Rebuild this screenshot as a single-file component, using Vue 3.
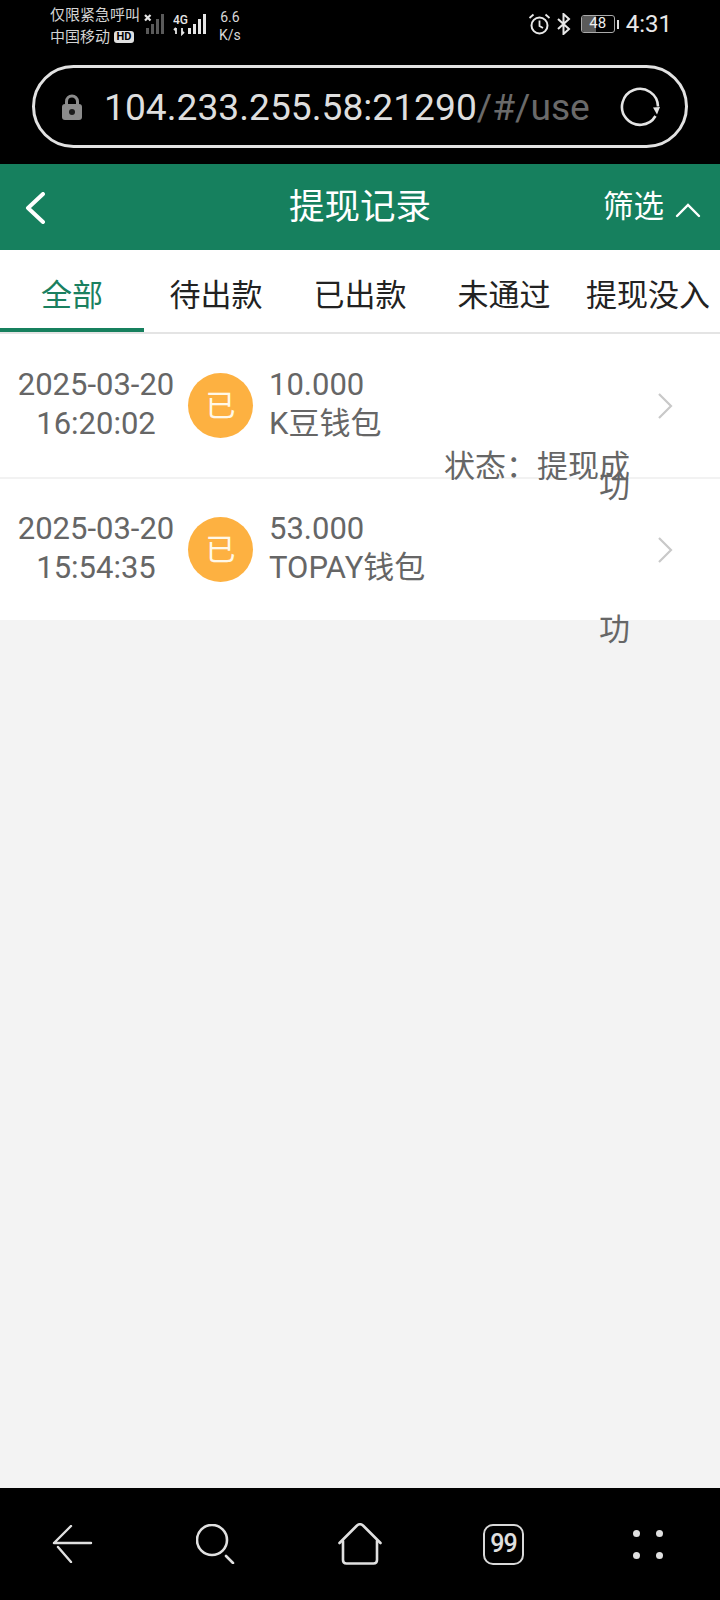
<script setup>
import { ref } from 'vue'

const tabs = ['全部', '待出款', '已出款', '未通过', '提现没入']
const active = ref(0)

const records = [
  { date: '2025-03-20', time: '16:20:02', amount: '10.000', wallet: 'K豆钱包', status: '状态：提现成功' },
  { date: '2025-03-20', time: '15:54:35', amount: '53.000', wallet: 'TOPAY钱包', status: '功' },
]

const dimBars = [[0, 14, 6], [5, 10, 10], [10, 5, 15], [15, 0, 20]]
const liveBars = [[0, 14, 6], [5, 10, 10], [10, 5, 15], [15, 0, 20]]
</script>

<template>
  <div class="page">
    <div class="top">
      <div class="status">
        <div class="carrier">
          <span>仅限紧急呼叫</span>
          <span class="carrier-line">中国移动<b class="hd">HD</b></span>
        </div>
        <svg class="sig-one" width="22" height="22" viewBox="0 0 22 22">
          <path d="M1 1l5.500 5.500M6.500 1L1 6.500" stroke="#e6e6e6" stroke-width="2.200" fill="none" />
          <rect v-for="b in dimBars" :key="b[0]" :x="b[0] + 2" :y="b[1]" width="3" :height="b[2]" fill="#5a5a5a" />
        </svg>
        <svg class="sig-two" width="34" height="22" viewBox="0 0 34 22">
          <text x="0" y="9.500" class="net">4G</text>
          <path d="M3 14v6M1 16l2-2M9 14v6l2-2" stroke="#e6e6e6" stroke-width="1.800" fill="none" />
          <rect v-for="b in liveBars" :key="b[0]" :x="b[0] + 15" :y="b[1]" width="3" :height="b[2]" fill="#e6e6e6" />
        </svg>
        <div class="speed">
          <span>6.6</span>
          <span>K/s</span>
        </div>
        <div class="status-right">
          <svg width="23" height="22" viewBox="0 0 23 22" fill="none" stroke="#e8e8e8">
            <circle cx="11.500" cy="12.500" r="8" stroke-width="2" />
            <path d="M11.500 7.500v5.500l3.500 2" stroke-width="1.800" />
            <path d="M1.500 5l4-3.500M21.500 5l-4-3.500" stroke-width="1.800" />
          </svg>
          <svg class="bt" width="14" height="22" viewBox="0 0 14 22" fill="none" stroke="#e8e8e8" stroke-width="2">
            <path d="M1 6l11 10-5.500 5V1L12 6 1 16" />
          </svg>
          <div class="battery">
            <div class="battery-body"><i class="battery-fill"></i><span>48</span></div>
            <i class="battery-tip"></i>
          </div>
          <span class="clock">4:31</span>
        </div>
      </div>

      <div class="url-bar">
        <svg class="lock" width="20" height="26" viewBox="0 0 20 26">
          <path d="M4.500 12V7.500a5.500 5.500 0 0 1 11 0V12" stroke="#8c8c8c" stroke-width="3" fill="none" />
          <rect x="0" y="10" width="20" height="16" rx="3" fill="#8c8c8c" />
          <circle cx="10" cy="18" r="3" fill="#1c1c1c" />
        </svg>
        <div class="url"><span>104.233.255.58:21290</span><span class="url-path">/#/use</span></div>
        <svg class="reload" width="40" height="40" viewBox="0 0 40 40" fill="none">
          <path d="M35.500 29A18 18 0 1 1 38 19.500" stroke="#e4e4e4" stroke-width="2.600" />
          <path d="M33 20.500l7-.5-3 7.500z" fill="#e4e4e4" />
        </svg>
      </div>
    </div>

    <header class="head">
      <svg class="back" width="20" height="32" viewBox="0 0 20 32" fill="none">
        <path d="M18 2L3 16l15 14" stroke="#fff" stroke-width="4" stroke-linecap="round" stroke-linejoin="round" />
      </svg>
      <h1 class="title">提现记录</h1>
      <div class="filter">
        <span>筛选</span>
        <svg width="26" height="16" viewBox="0 0 26 16" fill="none">
          <path d="M2 14L13 3l11 11" stroke="#fff" stroke-width="2.400" stroke-linecap="round" />
        </svg>
      </div>
    </header>

    <nav class="tabs">
      <div v-for="(t, i) in tabs" :key="t" class="tab" :class="{ on: i === active }" @click="active = i">{{ t }}</div>
    </nav>

    <section class="list">
      <div v-for="r in records" :key="r.time" class="row">
        <div class="when">
          <span>{{ r.date }}</span>
          <span>{{ r.time }}</span>
        </div>
        <div class="badge">已</div>
        <div class="info">
          <span>{{ r.amount }}</span>
          <span>{{ r.wallet }}</span>
        </div>
        <svg class="arrow" width="16" height="26" viewBox="0 0 16 26" fill="none">
          <path d="M2 1l12 12L2 25" stroke="#c9c9c9" stroke-width="2.200" />
        </svg>
        <div class="state">{{ r.status }}</div>
      </div>
    </section>

    <div class="blank"></div>

    <footer class="bottom">
      <svg width="42" height="38" viewBox="0 0 42 38" fill="none" stroke="#e0e0e0" stroke-width="2.400" stroke-linecap="round">
        <path d="M2 18h37M2 18L19 1M6 22l13 15" />
      </svg>
      <svg width="40" height="40" viewBox="0 0 40 40" fill="none" stroke="#e0e0e0" stroke-width="2.600" stroke-linecap="round">
        <circle cx="16" cy="16" r="15" />
        <path d="M30 32l7 7" />
      </svg>
      <svg width="44" height="42" viewBox="0 0 44 42" fill="none" stroke="#e0e0e0" stroke-width="2.600" stroke-linecap="round" stroke-linejoin="round">
        <path d="M1.500 20L19 2.500q3-2.500 6 0L42.500 20" />
        <path d="M5 18v19q0 3.500 3.500 3.500h27q3.500 0 3.500-3.500V18" />
      </svg>
      <div class="count">99</div>
      <div class="dots"><i></i><i></i><i></i><i></i></div>
    </footer>
  </div>
</template>

<style scoped>
.page {
  width: 720px;
  height: 1600px;
  display: flex;
  flex-direction: column;
  overflow: hidden;
  background: #f3f3f3;
  font-family: Roboto, "Noto Sans CJK SC", sans-serif;
}

.top {
  height: 164px;
  flex: none;
  background: #000;
  color: #ddd;
}

.status {
  height: 60px;
  padding: 0 48px 0 50px;
  display: flex;
  align-items: flex-start;
  box-sizing: border-box;
}

.carrier {
  width: 94px;
  padding-top: 6px;
  display: flex;
  flex-direction: column;
  gap: 4px;
  font-size: 15px;
  line-height: 18px;
  color: #d4d4d4;
  white-space: nowrap;
}

.carrier-line {
  display: flex;
  align-items: center;
}

.hd {
  margin-left: 4px;
  width: 20px;
  height: 12px;
  border-radius: 3px;
  background: #e0e0e0;
  color: #000;
  font-size: 11px;
  line-height: 12px;
  text-align: center;
  font-weight: 700;
}

.sig-one {
  margin-top: 14px;
}

.sig-two {
  margin: 14px 0 0 7px;
}

.net {
  font-size: 12px;
  font-weight: 500;
  fill: #e6e6e6;
}

.speed {
  margin: 8px 0 0 12px;
  display: flex;
  flex-direction: column;
  align-items: center;
  font-size: 14px;
  line-height: 18px;
  color: #d8d8d8;
}

.status-right {
  margin-left: auto;
  padding-top: 13px;
  display: flex;
  align-items: center;
  color: #e8e8e8;
}

.bt {
  margin-left: 6px;
}

.battery {
  margin-left: 10px;
  display: flex;
  align-items: center;
  gap: 2px;
}

.battery-body {
  position: relative;
  width: 34px;
  height: 18px;
  box-sizing: border-box;
  border: 1.500px solid #aaa;
  border-radius: 3px;
  overflow: hidden;
  font-size: 15px;
  line-height: 15px;
  text-align: center;
  color: #eee;
}

.battery-fill {
  position: absolute;
  left: 0;
  top: 0;
  bottom: 0;
  width: 46%;
  background: #5a5a5a;
}

.battery-body span {
  position: relative;
}

.battery-tip {
  width: 2px;
  height: 9px;
  background: #ddd;
}

.clock {
  margin-left: 7px;
  font-size: 24px;
  line-height: 22px;
}

.url-bar {
  height: 83px;
  margin: 5px 32px 0;
  padding: 0 25px 0 27px;
  display: flex;
  align-items: center;
  box-sizing: border-box;
  border: 3px solid #e2e2e2;
  border-radius: 42px;
}

.lock {
  flex: none;
}

.url {
  margin-left: 22px;
  width: 488px;
  overflow: hidden;
  white-space: nowrap;
  font-size: 37.200px;
  color: #dedede;
}

.url-path {
  color: #6a6a6a;
}

.reload {
  margin-left: auto;
  flex: none;
}

.head {
  height: 86px;
  flex: none;
  padding: 0 19px 0 25px;
  display: flex;
  align-items: center;
  position: relative;
  background: #16805e;
  color: #fff;
}

.back {
  margin-top: 1px;
}

.title {
  position: absolute;
  left: 0;
  right: 0;
  margin: 0;
  text-align: center;
  font-size: 35.500px;
  font-weight: 400;
  line-height: 86px;
  margin-top: -1px;
}

.filter {
  margin-left: auto;
  display: flex;
  align-items: center;
  gap: 11px;
  font-size: 30.500px;
  line-height: 40px;
}

.filter svg {
  margin-top: 6px;
}

.tabs {
  height: 84px;
  flex: none;
  display: grid;
  grid-template-columns: repeat(5, 144px);
  box-sizing: border-box;
  background: #fff;
  border-bottom: 2px solid #e4e4e4;
}

.tab {
  height: 82px;
  box-sizing: border-box;
  padding-top: 24px;
  text-align: center;
  font-size: 31px;
  line-height: 44px;
  color: #222;
  white-space: nowrap;
}

.tab.on {
  color: #1a8060;
  border-bottom: 4px solid #16805e;
}

.list {
  flex: none;
  background: #fff;
}

.row {
  height: 143px;
  box-sizing: border-box;
  padding: 0 47px 0 18px;
  display: flex;
  align-items: center;
  position: relative;
  font-size: 31px;
  line-height: 39px;
  color: #666;
}

.row + .row {
  border-top: 2px solid #f2f2f2;
}

.when {
  width: 156px;
  margin-top: -4px;
  display: flex;
  flex-direction: column;
  align-items: center;
  white-space: nowrap;
}

.badge {
  width: 65px;
  height: 65px;
  margin-left: 14px;
  flex: none;
  border-radius: 50%;
  background: #fdb141;
  color: #fff8e8;
  text-align: center;
  font-size: 30px;
  line-height: 66px;
}

.info {
  margin: -4px 0 0 16px;
  display: flex;
  flex-direction: column;
  white-space: nowrap;
}

.arrow {
  margin-left: auto;
}

.state {
  position: absolute;
  z-index: 1;
  right: 90px;
  top: 123px;
  width: 188px;
  text-align: right;
  font-size: 31px;
  line-height: 20px;
}

.row + .row .state {
  top: 121px;
  padding-top: 20px;
}

.blank {
  flex: 1;
}

.bottom {
  height: 112px;
  flex: none;
  padding: 0 0 0 52px;
  display: flex;
  align-items: center;
  gap: 102px;
  box-sizing: border-box;
  background: #000;
}

.count {
  width: 41px;
  height: 41px;
  margin-left: -1px;
  box-sizing: border-box;
  border: 2.500px solid #d8d8d8;
  border-radius: 10px;
  color: #e0e0e0;
  text-align: center;
  font-size: 25px;
  line-height: 36px;
  letter-spacing: -1px;
  font-weight: 500;
}

.dots {
  width: 30px;
  margin-left: 7px;
  display: grid;
  grid-template-columns: 7px 7px;
  justify-content: space-between;
  row-gap: 15px;
}

.dots i {
  width: 7px;
  height: 7px;
  border-radius: 50%;
  background: #e0e0e0;
}
</style>

<style>
html,
body {
  background: #000;
}
</style>
